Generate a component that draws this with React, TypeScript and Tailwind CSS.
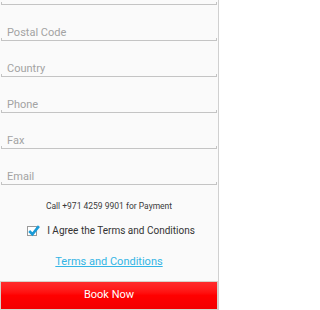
import React from 'react'

const fields = ['State', 'Postal Code', 'Country', 'Phone', 'Fax', 'Email']

function Field({ label }: { label: string }) {
    return (
        <div className="h-[36px] flex flex-col justify-end">
            <span className="px-[7px] text-[11px] leading-[16px] -mb-[3px] text-[#a3a3a3]">
                {label}
            </span>
            <div className="mx-[1px] h-[3px] border-x border-b border-[#c4c4c4]" />
        </div>
    )
}

export default function App() {
    return (
        <div
            className="w-[219px] h-[310px] overflow-hidden flex bg-[#fafafa]"
            style={{ fontFamily: 'Roboto, "Noto Sans", sans-serif' }}
        >
            <div className="w-[218px] flex flex-col">
                <div className="-mt-[31px]">
                    {fields.map((f) => (
                        <Field key={f} label={f} />
                    ))}
                </div>

                <p className="mt-[15px] text-center text-[8.5px] leading-[12px] text-[#3a3a3a]">
                    Call +971 4259 9901 for Payment
                </p>

                <label className="mt-[11px] h-[16px] flex items-center justify-center gap-[10px] pl-[4px]">
                    <span className="relative w-[10px] h-[10px] border border-[#9a9a9a] bg-white">
                        <svg
                            viewBox="0 0 12 12"
                            className="absolute -left-[1px] -top-[3px] w-[13px] h-[13px]"
                        >
                            <path
                                d="M2 6.5 L5 9.5 L11 2"
                                fill="none"
                                stroke="#1a9bd7"
                                strokeWidth="2.4"
                            />
                        </svg>
                    </span>
                    <span className="text-[10px] leading-[16px] text-[#333]">
                        I Agree the Terms and Conditions
                    </span>
                </label>

                <a className="mt-[16px] text-center text-[11px] leading-[14px] text-[#33b5e5] underline">
                    Terms and Conditions
                </a>

                <div className="mt-[12px] border border-[#d7d2c9] flex-1 flex">
                    <button className="flex-1 bg-gradient-to-b from-[#ff2b2b] via-[#ff0000] to-[#f20000] text-white text-[11px] leading-[16px] pb-[2px]">
                        Book Now
                    </button>
                </div>
            </div>
            <div className="w-[1px] bg-[#d0d0d0]" />
        </div>
    )
}
